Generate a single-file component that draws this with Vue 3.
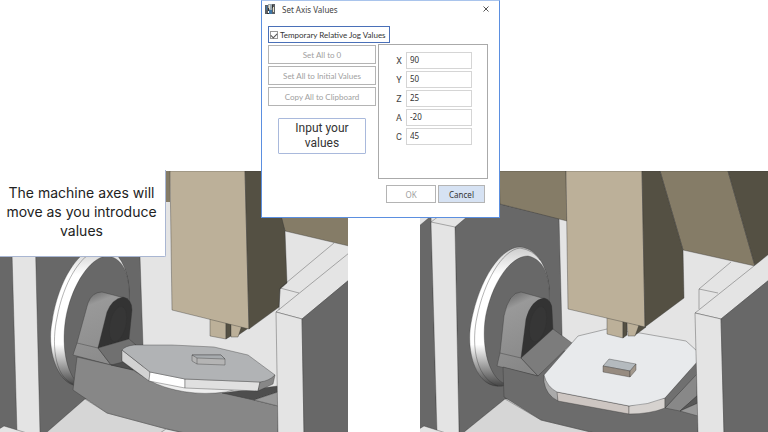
<script setup>
import { ref, reactive } from 'vue'

const relative = ref(true)
const axes = reactive([
  { name: 'X', value: '90' },
  { name: 'Y', value: '50' },
  { name: 'Z', value: '25' },
  { name: 'A', value: '-20' },
  { name: 'C', value: '45' }
])
const bulkActions = ['Set All to 0', 'Set All to Initial Values', 'Copy All to Clipboard']
</script>

<template>
  <main class="stage">
    <div class="views">
      <svg class="view" viewBox="0 171 348 261" role="img" aria-label="Machine before the move">
        <defs>
          <linearGradient id="ringLeft" x1="0" y1="0" x2="0" y2="1">
            <stop offset="0" stop-color="#ccc" />
            <stop offset="0.2" stop-color="#fff" />
            <stop offset="0.7" stop-color="#fff" />
            <stop offset="1" stop-color="#444" />
          </linearGradient>
          <linearGradient id="archLeft" x1="0" y1="0" x2="0.3" y2="1">
            <stop offset="0" stop-color="#555" />
            <stop offset="0.25" stop-color="#999" />
            <stop offset="1" stop-color="#8c8c8c" />
          </linearGradient>
        </defs>
        <path class="light" d="M0 171h348v261H0z" />
        <path class="brown" d="M160 171h10v31h-10z" />
        <g class="edged">
          <path class="steel" d="M-1 227L11 217L17 433H-1z" />
          <path class="steel" d="M35 227H139L143 346V399H85L46 433H40z" />
          <path class="floor" d="M46 433L85 399L107 413L163 428L185 433z" />
          <path class="light" d="M-1 429L4 426L27 433H-1zM160 433L166 429L184 433z" />
          <path fill="url(#ringLeft)" d="M77 386C55 383 47 346 52 322C58 280 80 247 99 247C122 248 131 274 129 308L110 372z" />
          <path class="steel" d="M75 380C62 363 62 330 68 308C76 278 93 256 108 256C126 259 131 280 129 308L110 372z" />
          <path fill="none" d="M73 384C53 376 52 340 57 318C63 284 80 254 99 249" />
          <path fill="url(#archLeft)" d="M73 355L77 343L88 303Q92 292 102 292L128 299L98 348L111 365z" />
          <path fill="#333" d="M98 348L107 312Q112 299 123 297Q132 299 132 310L129 339z" />
          <ellipse cx="118" cy="324" rx="8" ry="18" transform="rotate(12 118 324)" fill="#363636" />
          <path fill="none" d="M77 343L98 348" />
          <path fill="#707070" d="M98 348L129 339L136 345L123 350L122 362L133 370L111 365z" />
          <path fill="#878787" d="M77 357L111 365L133 370L150 381L226 393L278 406V433H185L163 428L107 413L73 390z" />
          <path fill="#505050" d="M111 365L123 362L133 370z" />
          <path fill="#4e4e4e" d="M222 393L278 386V392L254 400z" />
          <path fill="#999" d="M254 400L278 392V406z" />
          <path fill="#eee" d="M150 381C170 391 197 396 226 392L240 388z" />
          <path fill="#d2d2d2" d="M122 350V361L149 381L150 372z" />
          <path fill="#fff" d="M150 372L149 381L185 388V379z" />
          <path fill="#e0e0e0" d="M185 379V388L258 391L260 382z" />
          <path fill="#878787" d="M260 382L258 391L273 384L275 375z" />
          <path fill="#b1b3b5" d="M122 350Q125 346 134 345L172 345L214 347L248 355L275 375Q269 381 260 382L185 379L150 372z" />
          <path fill="#b4b4b4" d="M192 355L221 355L225 359V365L197 364L192 361z" />
          <path fill="#a7abae" d="M192 355H221L225 359L197 358z" />
          <path fill="none" d="M197 358V364" />
          <path class="brown" d="M262 171H349V246L285 231z" />
          <path class="tan" d="M210 317V336L226 339V320z" />
          <path class="umber" d="M226 320V339L231 336V322zM239 324L237 336L250 327z" />
          <path class="tan" d="M231 322V337H238L242 325z" />
          <path class="tan" d="M170 171H245L249 329L172 310z" />
          <path class="umber" d="M245 171H270L285 231L287 283L280 289L279 307L249 329z" />
          <path class="light" d="M276 312L349 253V280L302 319z" />
          <path class="light" d="M276 312L302 319L304 433H278z" />
          <path class="steel" d="M302 319L349 280V433H304z" />
          <path fill="none" d="M334 243L280 288L299 293M280 288L279 310" />
        </g>
      </svg>

      <svg class="view" viewBox="420 171 348 261" role="img" aria-label="Machine after the move">
        <defs>
          <linearGradient id="ringRight" x1="0" y1="0" x2="0" y2="1">
            <stop offset="0" stop-color="#ccc" />
            <stop offset="0.2" stop-color="#fff" />
            <stop offset="0.7" stop-color="#fff" />
            <stop offset="1" stop-color="#444" />
          </linearGradient>
          <linearGradient id="archRight" x1="0" y1="0" x2="0.3" y2="1">
            <stop offset="0" stop-color="#555" />
            <stop offset="0.25" stop-color="#999" />
            <stop offset="1" stop-color="#878787" />
          </linearGradient>
        </defs>
        <path class="light" d="M420 171h348v261H420z" />
        <g class="edged">
          <path class="steel" d="M419 226L431 216L437 433H419z" />
          <path class="steel" d="M455 227L480 204H500L559 218L562 333V399H505L463 433H459z" />
          <path class="light" d="M431 222L439 216H468L455 227L459 433H437z" />
          <path fill="none" d="M431 222L455 227" />
          <path class="floor" d="M463 433L505 399L541 420L595 433z" />
          <path class="light" d="M419 429L424 426L446 433H419z" />
          <path fill="url(#ringRight)" d="M503 386C475 390 466 350 471 323C479 279 501 247 520 247C541 249 552 275 549 308L530 372z" />
          <path class="steel" d="M503 383C484 372 481 333 487 310C495 278 512 256 528 256C547 260 551 283 549 308L530 372z" />
          <path fill="none" d="M498 386C473 377 472 339 477 317C484 282 502 250 520 248Q533 250 540 260" />
          <path fill="url(#archRight)" d="M497 366L500 353L504 316Q509 292 521 292L549 300L521 358L538 376z" />
          <path fill="#333" d="M521 358L526 319Q531 300 544 298Q552 300 552 310L553 330z" />
          <ellipse cx="538" cy="324" rx="8" ry="18" transform="rotate(12 538 324)" fill="#363636" />
          <path fill="none" d="M500 353L521 358" />
          <path fill="#6c6c6c" d="M503 367L538 376L560 350L698 372V433H595L541 420L504 397z" />
          <path fill="#7c7c7c" d="M521 358L553 329L572 343L538 376z" />
          <path fill="#888" d="M665 408L697 373V396L680 411z" />
          <path fill="#585858" d="M680 411L698 395V403z" />
          <path fill="#999" d="M680 411L698 403V416z" />
          <path fill="#aaa" d="M544 375V382Q546 395 558 401V392z" />
          <path fill="#cdc6c2" d="M557 392L558 401L629 414V406z" />
          <path fill="#d6d2cf" d="M629 406V414Q650 414 665 408V398z" />
          <path fill="#707070" d="M665 398L697 362V374L665 408z" />
          <path fill="#e8eaec" d="M544 375L578 336L607 329L640 333L686 341L697 351V362L665 398Q648 405 629 406L557 392Q547 387 544 375z" />
          <path fill="#b4babe" d="M603 366L609 359L636 364L630 371z" />
          <path fill="#968b80" d="M603 366V372L630 377V371z" />
          <path fill="#a2988c" d="M630 371L636 364V370L630 377z" />
          <path class="brown" d="M499 171H566L567 221L500 204z" />
          <path class="brown" d="M660 171H728L755 266L683 250z" />
          <path class="umber" d="M728 171H769V254L755 266z" />
          <path class="tan" d="M607 317V334L623 338V320z" />
          <path class="umber" d="M623 320V338L627 335V322zM637 324L634 336L646 327z" />
          <path class="tan" d="M627 322L628 336H635L639 325z" />
          <path class="tan" d="M566 171H642L645 327L568 309z" />
          <path class="umber" d="M642 171H660L683 250L684 298L645 327z" />
          <path class="light" d="M695 313L769 254V280L721 319z" />
          <path class="light" d="M695 313L721 319L724 433H698z" />
          <path class="steel" d="M721 319L769 280V433H724z" />
          <path fill="none" d="M731 262L699 289L718 293M699 289V309" />
        </g>
      </svg>
    </div>

    <p class="callout">The machine axes will move as you introduce values</p>

    <form class="dialog" @submit.prevent>
      <header class="titlebar">
        <svg class="app-icon" viewBox="0 0 11 11" aria-hidden="true">
          <path fill="#5c6065" d="M0 1h3v9H0zM7 0h3v10H7z" />
          <path fill="#9daab2" d="M3 0h4v7H3z" />
          <path fill="#3e76a6" d="M1 2h1v4H1zM4 6h3v4H4z" />
          <path fill="#e9e2c8" d="M4 1h1v4H4zM8 3h1v5H8z" />
          <path fill="#333" d="M3 4h1v3H3zM7 1h1v3H7zM2 9h2v1H2z" />
        </svg>
        <h1>Set Axis Values</h1>
        <button type="button" class="close" aria-label="Close">
          <svg viewBox="0 0 6 6"><path d="M0.500 0.500L5.500 5.500M5.500 0.500L0.500 5.500" /></svg>
        </button>
      </header>

      <label class="relative-toggle">
        <input v-model="relative" type="checkbox" />
        <span>Temporary Relative Jog Values</span>
      </label>

      <div class="body">
        <div class="bulk">
          <button v-for="action in bulkActions" :key="action" type="button" disabled>{{ action }}</button>
          <p class="note">Input your values</p>
        </div>
        <div class="axes">
          <div v-for="axis in axes" :key="axis.name" class="axis">
            <label :for="'axis-' + axis.name">{{ axis.name }}</label>
            <input :id="'axis-' + axis.name" v-model="axis.value" type="text" />
          </div>
        </div>
      </div>

      <footer class="actions">
        <button type="submit" disabled>OK</button>
        <button type="button" class="cancel">Cancel</button>
      </footer>
    </form>
  </main>
</template>

<style>
body {
  background: #fff;
}
</style>

<style scoped>
.stage {
  position: relative;
  padding-top: 171px;
  overflow: hidden;
  font-family: Inter, "Liberation Sans", sans-serif;
}

.stage * {
  box-sizing: border-box;
}

.views {
  display: grid;
  grid-template-columns: 1fr 1fr;
  gap: 72px;
}

.view {
  display: block;
  width: 100%;
}

.edged path,
.edged ellipse {
  stroke: #303030;
  stroke-opacity: 0.6;
  stroke-width: 0.6;
  stroke-linejoin: round;
}

.light { fill: #e4e4e4; }
.steel { fill: #686868; }
.floor { fill: #d6d6d6; }
.tan { fill: #bcb099; }
.brown { fill: #857c67; }
.umber { fill: #545043; }

.callout {
  position: absolute;
  top: 170px;
  left: 0;
  width: 166px;
  margin: 0;
  padding: 13px 2px 16px 0;
  border: 1px solid #a9b6d2;
  border-width: 0 1px 1px 0;
  border-radius: 0 0 2px 0;
  background: #fff;
  color: #222;
  font-size: 14px;
  line-height: 19px;
  text-align: center;
}

.dialog {
  position: absolute;
  top: 0;
  left: 261px;
  width: 239px;
  padding: 0 6px 14px;
  border: 1px solid #5b8fe0;
  border-top-color: #a9c4ec;
  background: #fff;
  color: #444;
  font-family: "Noto Sans", sans-serif;
  font-size: 8px;
}

.titlebar {
  display: flex;
  align-items: center;
  height: 16px;
  margin-bottom: 9px;
  padding: 0 4px 0 0;
}

.app-icon {
  width: 11px;
  height: 11px;
  margin: 0 6px 0 -3px;
}

.titlebar h1 {
  flex: 1;
  margin: 0;
  padding-top: 1px;
  font: inherit;
  line-height: 16px;
}

.close {
  display: flex;
  padding: 0;
  border: 0;
  background: none;
}

.close svg {
  width: 6px;
  height: 6px;
  stroke: #555;
}

.relative-toggle {
  display: flex;
  align-items: center;
  gap: 2px;
  width: 122px;
  height: 17px;
  padding-left: 1px;
  border: 1px solid #4a70b8;
  color: #333;
  font-family: Lato, sans-serif;
  white-space: nowrap;
}

.relative-toggle input {
  appearance: none;
  flex: none;
  display: grid;
  place-items: center;
  width: 8px;
  height: 8px;
  margin: 0;
  border: 1px solid #999;
}

.relative-toggle input:checked::before {
  content: "";
  width: 5px;
  height: 3px;
  border: solid #555;
  border-width: 0 0 1px 1px;
  transform: rotate(-45deg);
}

.body {
  display: flex;
  gap: 2px;
  margin-top: 1px;
}

.bulk {
  display: flex;
  flex: none;
  flex-direction: column;
  gap: 2px;
  width: 108px;
  padding-top: 1px;
  font-family: Lato, sans-serif;
}

.dialog .bulk button,
.actions button {
  height: 19px;
  padding: 0;
  border: 1px solid #b4b4b4;
  background: #fff;
  color: #a0a0a0;
  font: inherit;
}

.note {
  width: 88px;
  margin: 10px 10px 0;
  padding: 2px 10px;
  border: 1px solid #a9b9dc;
  border-radius: 1px;
  color: #333;
  font-family: Roboto, sans-serif;
  font-size: 12px;
  line-height: 15px;
  text-align: center;
}

.axes {
  display: flex;
  flex: 1;
  flex-direction: column;
  gap: 2px;
  min-width: 0;
  height: 135px;
  margin-right: 5px;
  padding: 7px 15px 0 14px;
  border: 1px solid #aaa;
}

.axis {
  display: flex;
  align-items: center;
}

.axis label {
  width: 12px;
  font-family: Roboto, sans-serif;
  font-size: 9px;
  text-align: center;
}

.axis input {
  flex: 1;
  min-width: 0;
  height: 17px;
  margin-left: 1px;
  padding: 0 3px 2px;
  border: 1px solid #d5d5d5;
  outline: none;
  color: #333;
  font: inherit;
}

.actions {
  display: flex;
  justify-content: flex-end;
  gap: 2px;
  margin-top: 6px;
  padding-right: 8px;
}

.actions button {
  width: 50px;
  height: 18px;
}

.actions .cancel {
  width: 47px;
  background: #d6e2f3;
  color: #333;
}
</style>
